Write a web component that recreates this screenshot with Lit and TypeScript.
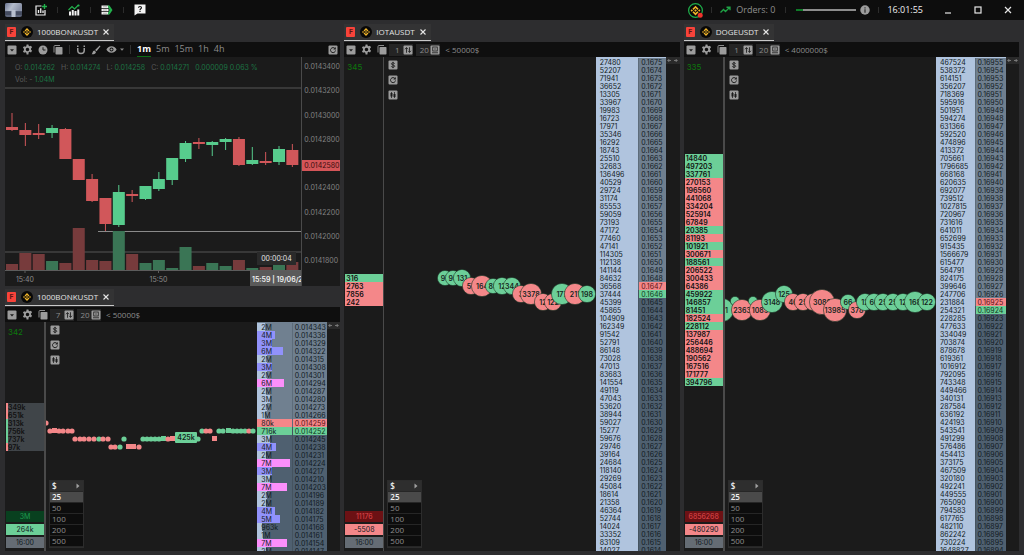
import { LitElement, html, svg, css } from "lit";
import { customElement, property } from "lit/decorators.js";
import { classMap } from "lit/directives/class-map.js";

/* ---------- icons ---------- */

const bnb = (size: number, ring = false) => html`<svg class="ico" width=${size} height=${size} viewBox="0 0 24 24" aria-hidden="true">
  <circle cx="12" cy="12" r=${ring ? 11 : 12} fill="#080808" stroke=${ring ? "#1fae4b" : "none"} stroke-width="2"></circle>
  <g fill="#f0b429">
    <path d="M12 4.2l4.9 4.9-1.9 1.9-3-3-3 3-1.9-1.9z"></path>
    <path d="M12 19.8l-4.9-4.9L9 13l3 3 3-3 1.9 1.9z"></path>
    <path d="M6 10.1L7.9 12 6 13.9 4.1 12zM18 10.1l1.9 1.9-1.9 1.9-1.9-1.9zM12 10l2 2-2 2-2-2z"></path>
  </g>
  ${ring ? svg`<circle cx="19.5" cy="19.5" r="4" fill="#f0342c"></circle>` : ""}
</svg>`;

const closeIcon = html`<svg class="ico" width="6" height="6" viewBox="0 0 6 6" aria-hidden="true"><path d="M.5.5l5 5M5.5.5l-5 5" stroke="#e6e6e6" stroke-width="1.1"></path></svg>`;

const boxIcon = (inner: unknown) => html`<svg class="ico" width="10" height="10" viewBox="0 0 20 20" aria-hidden="true">
  <rect x="1" y="1" width="18" height="18" rx="2" fill="#9c9c9c"></rect>${inner}</svg>`;

const dropIcon = boxIcon(svg`<path d="M6 8.5h8l-4 4.5z" fill="#1c1c1c"></path>`);
const reloadIcon = boxIcon(svg`<path d="M14 7.2A5 5 0 1 0 15 11" fill="none" stroke="#1c1c1c" stroke-width="2"></path><path d="M15.6 4v5h-5z" fill="#1c1c1c"></path>`);
const dollarIcon = boxIcon(svg`<path d="M13.3 7.3c-.5-1.2-1.7-1.7-3.3-1.7-1.9 0-3.2.8-3.2 2.1 0 3 6.6 1.5 6.6 4.6 0 1.4-1.4 2.2-3.4 2.2-1.8 0-3.1-.7-3.5-1.9M10 3.6v12.8" fill="none" stroke="#1c1c1c" stroke-width="1.8"></path>`);
const candlesIcon = boxIcon(svg`<path d="M7 4v12M13 4v12" stroke="#1c1c1c" stroke-width="1.5"></path><path d="M5 6h4v7H5zM11 8h4v6h-4z" fill="#1c1c1c"></path>`);
const sortIcon = boxIcon(svg`<path d="M7 15.5V6M4 8.5L7 5l3 3.5M13 4.5V14M10.5 11.5l2.5 3.5 3-3.5" fill="none" stroke="#1c1c1c" stroke-width="1.7"></path>`);
const depthIcon = boxIcon(svg`<rect x="5.5" y="4" width="9" height="8" fill="none" stroke="#1c1c1c" stroke-width="1.6"></rect><path d="M4 15.5h12M10 6.5v3" stroke="#1c1c1c" stroke-width="1.6"></path>`);

const gearIcon = html`<svg class="ico" width="11" height="11" viewBox="0 0 24 24" aria-hidden="true"><path fill="#9c9c9c" fill-rule="evenodd" d="M10 1h4l.6 3 2 1 3-1.3 2.3 3.6-2.2 2.3v2.8l2.3 2.3-2.4 3.6-3-1.3-2 1L14 23h-4l-.6-4-2-1-3 1.300L2 15.700l2.300-2.300v-2.800L2 8.300l2.400-3.600 3 1.300 2-1zM12 8.200a3.800 3.800 0 1 0 0 7.600 3.800 3.800 0 0 0 0-7.600z"></path></svg>`;
const copyIcon = html`<svg class="ico" width="10" height="10" viewBox="0 0 20 20" aria-hidden="true"><path d="M2 15V3a2 2 0 0 1 2-2h10" fill="none" stroke="#8c8c8c" stroke-width="2"></path><rect x="5" y="4" width="14" height="15" rx="1.5" fill="#9c9c9c"></rect></svg>`;
const clockIcon = html`<svg class="ico" width="10" height="10" viewBox="0 0 20 20" aria-hidden="true"><circle cx="10" cy="10" r="9" fill="#9c9c9c"></circle><path d="M10 4.5V10h5" fill="none" stroke="#1c1c1c" stroke-width="2"></path></svg>`;
const magnetIcon = html`<svg class="ico" width="10" height="10" viewBox="0 0 20 20" aria-hidden="true"><path d="M3.5 6v4.500a6.500 6.500 0 0 0 13 0V6" fill="none" stroke="#9c9c9c" stroke-width="3"></path><path d="M2 1h3v3H2zM15 1h3v3h-3z" fill="#9c9c9c"></path></svg>`;
const brushIcon = html`<svg class="ico" width="10" height="10" viewBox="0 0 20 20" aria-hidden="true"><path d="M17.5 1.2l1.6 1.5-8 10-3-2.800zM7 11l3 2.800c-.5 3.200-3 5-9 4.700C3.500 17 3 11.500 7 11z" fill="#9c9c9c"></path></svg>`;
const eyeIcon = html`<svg class="ico" width="11" height="9" viewBox="0 0 22 18" aria-hidden="true"><path fill="#9c9c9c" fill-rule="evenodd" d="M11 2.500C6 2.500 2.500 5.500.8 9c1.700 3.500 5.200 6.500 10.200 6.500S19.500 12.500 21.200 9C19.500 5.500 16 2.500 11 2.500zM11 5a4 4 0 1 1 0 8 4 4 0 0 1 0-8z"></path><circle cx="11" cy="9" r="2.2" fill="#9c9c9c"></circle></svg>`;
const caretIcon = html`<svg class="ico caret" width="4" height="3" viewBox="0 0 8 6" aria-hidden="true"><path d="M0 1h8L4 5.500z" fill="#8c8c8c"></path></svg>`;

/* ---------- shared rules ---------- */

const base = css`
  * { box-sizing: border-box; }
  button {
    font: inherit; color: inherit; background: none; border: 0; margin: 0; padding: 0;
    display: flex; align-items: center; justify-content: center;
  }
  .ico { display: block; flex: none; }
  .panel { display: flex; flex-direction: column; height: 100%; min-height: 0; }
  .bar {
    flex: none; height: 15px; display: flex; align-items: center; gap: 5px; padding: 0 2px;
    background: #0f0f0f; color: #8c8c8c; font: 8px/12px "Open Sans", sans-serif;
  }
  .canvas { flex: 1; min-height: 0; display: flex; background: #1b1b1b; overflow: hidden; }
  .divider { width: 1px; height: 9px; background: #333; margin: 0 1px; }
`;

@customElement("panel-tab")
class PanelTab extends LitElement {
  @property() name = "";
  static styles = [base, css`
    :host { display: flex; height: 18px; flex: none; }
    .tab {
      height: 17px; display: flex; align-items: center; padding: 0 5px 0 2px; background: #333334;
      border-bottom: 1px solid #c8c8c8; color: #e2e2e2; font: 8px/14px "Open Sans", sans-serif;
    }
    .flag {
      width: 9px; height: 10px; margin-right: 5px; border-radius: 1px; background: #f8433a; color: #5c1613;
      font: bold 7px/10px Roboto, sans-serif; text-align: center;
    }
    .name { margin: 0 5px 0 4px; }
  `];
  render() {
    return html`<div class="tab"><span class="flag">F</span>${bnb(12)}<span class="name">${this.name}</span>
      <button aria-label="Close ${this.name}">${closeIcon}</button></div>`;
  }
}

/* ---------- candle chart ---------- */

// up, high, open/close top, open/close bottom, low, volume top
const candles: [number, number, number, number, number, number][] = [
  [0, 113, 127, 130, 131, 264], [0, 123, 130, 135, 146, 253], [0, 124, 133, 135, 139, 254],
  [1, 125, 128, 133, 138, 261], [0, 128, 129, 159, 159, 263], [0, 159, 159, 180, 180, 228],
  [0, 174, 179, 201, 202, 260], [0, 198, 198, 224, 231, 261], [1, 185, 192, 225, 227, 231],
  [0, 190, 194, 196, 202, 254], [1, 186, 186, 199, 200, 263], [1, 172, 179, 189, 191, 260],
  [1, 158, 158, 180, 185, 268], [1, 141, 143, 159, 162, 247], [0, 138, 142, 144, 149, 266],
  [1, 141, 142, 145, 156, 263], [1, 138, 139, 142, 150, 266], [0, 137, 139, 165, 166, 260],
  [1, 147, 160, 164, 165, 268], [0, 152, 161, 163, 165, 267], [1, 146, 149, 162, 165, 262],
  [0, 144, 150, 165, 167, 262],
];
const scale = ["0.0143400", "0.0143200", "0.0143000", "0.0142800", "", "0.0142400", "0.0142200", "0.0142000", "0.0141800"];
const frames = ["1m", "5m", "15m", "1h", "4h"];

@customElement("candle-panel")
class CandlePanel extends LitElement {
  static styles = [base, css`
    :host { display: block; min-width: 0; min-height: 0; }
    .caret { margin-left: -2px; }
    .frames { display: flex; gap: 5px; font-size: 9px; }
    .frames button { height: 15px; border-bottom: 1px solid transparent; }
    .frames button.on { color: #fff; font-weight: 700; border-color: #0b6d14; }
    .last { margin-left: auto; }
    .plot { position: relative; flex: 1; min-width: 0; display: flex; justify-content: flex-end; overflow: hidden; }
    .plot svg { flex: none; display: block; }
    .plot text { font: 7px Inter, sans-serif; fill: #8a8a8a; }
    .plot .lit { fill: #e4e4e4; }
    .plot .now { fill: #f0f0f0; font-weight: 600; }
    .info { position: absolute; left: 10px; top: 5px; font: 7px/12px Inter, sans-serif; color: #5a5a5a; }
    .info p { margin: 0; display: flex; gap: 6px; }
    .info b { font-weight: 400; color: #1b7343; }
    .axis {
      position: relative; flex: none; width: 39px; border-left: 1px solid #4a4a4a; padding: 5px 0 20px 2px;
      display: flex; flex-direction: column; justify-content: space-between;
      color: #828282; font: 7px/10px Inter, sans-serif;
    }
    .axis span { height: 10px; }
    .axis mark { position: absolute; left: 0; right: 0; height: 11px; padding-left: 2px; line-height: 11px; background: #d45558; color: #3a0d0e; }
  `];
  render() {
    return html`<section class="panel">
      <panel-tab name="1000BONKUSDT"></panel-tab>
      <div class="bar">
        <button aria-label="Menu">${dropIcon}</button><button aria-label="Settings">${gearIcon}</button>
        <button aria-label="History">${clockIcon}</button><button aria-label="Duplicate">${copyIcon}</button>
        <span class="divider"></span>
        <button aria-label="Magnet">${magnetIcon}</button><button aria-label="Draw">${brushIcon}</button>
        <button aria-label="Visibility">${eyeIcon}</button>${caretIcon}
        <span class="divider"></span>
        <div class="frames">${frames.map((f, i) => html`<button class=${classMap({ on: i === 0 })}>${f}</button>`)}</div>
        <button class="last" aria-label="Reset chart">${reloadIcon}</button>
      </div>
      <div class="canvas">
        <div class="plot">
          <svg width="296" height="229" viewBox="5 57 296 229" role="img" aria-label="1000BONKUSDT one minute candles">
            <path d="M5 88h296M5 252h296" stroke="#565656" stroke-width="1"></path>
            <path d="M98 231.5h203" stroke="#8a8a8a" stroke-width="1"></path>
            ${candles.map(([up, hi, a, b, lo, v], i) => {
              const x = 6 + i * 13.35;
              const c = up ? "#57cc8d" : "#d1575a";
              return svg`<rect x=${x} y=${v} width="12" height=${270 - v} fill=${up ? "#3a7555" : "#773b3c"}></rect>
                <path d="M${x + 6} ${hi}V${lo}" stroke=${c} stroke-width="1"></path>
                <rect x=${x} y=${a} width="12" height=${b - a} fill=${c}></rect>`;
            })}
            <path d="M5 270.5h296M25 270v3M158.500 270v3" stroke="#5c5c5c" stroke-width="1"></path>
            <rect x="257" y="252" width="39" height="13" fill="#2a2a2a"></rect>
            <text class="lit" x="276.5" y="261" text-anchor="middle">00:00:04</text>
            <text x="25" y="282" text-anchor="middle">15:40</text>
            <text x="158.5" y="282" text-anchor="middle">15:50</text>
            <rect x="250" y="271" width="51" height="15" fill="#5a5a5a"></rect>
            <text class="now" x="252" y="282">15:59 | 19/06/25</text>
          </svg>
          <div class="info">
            <p><span>O: <b>0.014262</b></span><span>H: <b>0.014274</b></span><span>L: <b>0.014258</b></span><span>C: <b>0.014271</b></span><b>0.000009 0.063 %</b></p>
            <p><span>Vol: - <b>1.04M</b></span></p>
          </div>
        </div>
        <div class="axis">${scale.map((s) => html`<span>${s}</span>`)}<mark style="top:45%">0.0142580</mark></div>
      </div>
    </section>`;
  }
}

/* ---------- order book panels ---------- */

type Bubble = [number, number, number, string, string];
type Cell = [string, string];
interface Book {
  name: string; step: string; limit: string; count: string;
  view: string; width: number; height: number;
  from: number; tick: number; digits: number; ask: number;
  volumes: string[]; bars?: [number, string][];
  clusterAt: number; cluster: Cell[]; totals: Cell[];
  bubbles: Bubble[]; kind: string;
}

const bonk: Book = {
  name: "1000BONKUSDT", step: "7", limit: "< 50000$", count: "342",
  view: "46 322 211 229", width: 211, height: 229, kind: "thin",
  from: 14343, tick: 7, digits: 6, ask: 12,
  volumes: "2M 4M 3M 6M 2M 3M 2M 6M 2M 3M 2M 1M 80k 716k 3M 4M 2M 7M 3M 3M 7M 2M 2M 4M 5M 963k 1M 7M 2M".split(" "),
  bars: [[8, "l"], [18, "b"], [15, "b"], [26, "b"], [10, "l"], [15, "b"], [10, "l"], [27, "p"], [9, "l"], [13, "l"], [10, "l"], [8, "l"],
    [35, "r"], [35, "g"], [13, "l"], [19, "b"], [9, "l"], [33, "p"], [15, "b"], [13, "l"], [30, "p"], [10, "l"], [9, "l"], [18, "b"],
    [23, "b"], [5, "l"], [6, "l"], [30, "p"], [9, "l"]],
  clusterAt: 10,
  cluster: [["349k", "mr"], ["651k", "mr"], ["313k", "mg"], ["756k", "mg"], ["737k", "mg"], ["97k", "mr"]],
  totals: [["3M", "deep-g"], ["264k", "g"], ["16:00", "time"]],
  bubbles: [
    [46, 423, 2, "r", ""], [50, 431, 2, "r", ""], [54, 430, 2, "r", "sq"], [59, 431, 2, "r", ""], [63, 431, 2, "r", ""], [68, 431, 2, "r", ""], [72, 431, 2, "r", ""],
    [75, 439, 2, "r", ""], [80, 439, 2, "r", ""], [84, 439, 2, "r", ""], [89, 439, 2, "r", ""], [94, 439, 2, "r", ""], [99, 439, 2, "g", ""], [103, 439, 2, "r", ""], [108, 439, 2, "r", ""],
    [111, 447, 2, "r", ""], [115, 447, 2, "r", ""], [120, 447, 2, "g", ""], [124, 439, 2, "g", ""], [128, 446, 2, "r", "sq"], [133, 446, 2, "r", "sq"], [139, 447, 2, "r", ""],
    [143, 439, 2, "g", ""], [147, 439, 2, "g", ""], [151, 439, 2, "g", ""], [155, 439, 2, "g", ""], [159, 439, 2, "g", ""], [163, 438, 2, "g", "sq"], [168, 439, 2, "r", ""], [172, 438, 2, "r", "sq"],
    [198, 439, 2, "g", ""], [202, 431, 2, "g", ""], [206, 431, 2, "r", ""], [210, 431, 2, "r", ""], [214, 438, 2, "r", "sq"], [219, 431, 2, "g", ""], [223, 431, 2, "g", ""],
    [228, 430, 2, "g", "sq"], [233, 431, 2, "g", ""], [237, 431, 2, "g", ""], [241, 431, 2, "g", ""], [245, 431, 2, "g", ""], [249, 431, 2, "r", ""], [253, 431, 2, "g", ""],
    [186, 438, 6, "g", "425k"],
  ],
};

const iota: Book = {
  name: "IOTAUSDT", step: "1", limit: "< 50000$", count: "345",
  view: "385 57 211 494", width: 211, height: 494, kind: "wide",
  from: 1675, tick: 1, digits: 4, ask: 28,
  volumes: "27480 52207 71941 36652 13305 33967 19983 16723 17971 35346 16292 18743 25510 32683 136496 40529 29724 31174 85553 59059 73193 47172 77460 47141 114305 112138 141144 84632 36568 37444 45399 45865 104909 162349 91542 52791 86148 73028 47013 83683 141554 49119 47043 53620 38944 59027 15277 59676 29746 39164 24684 118140 29269 45084 18614 21358 46364 52744 14024 33352 83109 14027".split(" "),
  clusterAt: 27,
  cluster: [["316", "g"], ["2763", "r"], ["7856", "r"], ["242", "r"]],
  totals: [["11176", "deep-r"], ["-5508", "r"], ["16:00", "time"]],
  bubbles: [
    [445, 278, 7, "g", "97"], [453, 278, 7, "g", "95"], [462, 278, 8, "g", "131"], [471, 286, 8, "r", "57"], [482, 286, 10, "r", "164"],
    [493, 286, 7, "g", "85"], [502, 286, 8, "g", "12"], [512, 286, 8, "g", "344"], [521, 294, 8, "r", "3"], [531, 294, 10, "r", "3378"],
    [543, 302, 8, "r", "12"], [553, 302, 8, "r", "122"], [562, 294, 10, "g", "177"], [575, 294, 10, "r", "211"], [587, 294, 8, "g", "198"],
  ],
};

const doge: Book = {
  name: "DOGEUSDT", step: "1", limit: "< 4000000$", count: "335",
  view: "725 57 211 494", width: 211, height: 494, kind: "mid",
  from: 16955, tick: 1, digits: 5, ask: 30,
  volumes: "467524 538372 614151 356207 718369 595916 501951 594274 631366 592520 474896 413372 705661 1796685 668168 620635 692077 739512 1027815 720967 731616 641011 652699 915435 1566679 615477 564791 824175 399646 247706 231884 254321 228285 477633 334049 703874 878678 619361 1016912 792095 743348 449466 340131 287584 636192 424193 543541 491299 576486 454413 373175 467509 320180 492241 449555 765090 794583 617765 482110 862242 730224 1648827".split(" "),
  clusterAt: 12,
  cluster: "14840g 497203g 337761g 270153r 196560r 441068r 334204r 525914r 67849r 20385g 81193r 101921g 300671r 188561g 206522r 300433r 64386r 459922g 146857g 81451g 182524r 228112g 137987r 256446r 488694r 190562r 167516r 171777r 394796g"
    .split(" ").map((s): Cell => [s.slice(0, -1), s.slice(-1)]),
  totals: [["6856268", "deep-r"], ["-480290", "r"], ["16:00", "time"]],
  bubbles: [
    [722, 310, 11, "g", "321"], [735, 301, 4, "g", ""], [742, 310, 10, "r", "2363"], [753, 301, 4, "g", ""], [760, 310, 10, "r", "1085"],
    [772, 302, 10, "g", "3148"], [784, 294, 8, "g", "125"], [793, 302, 8, "r", "46"], [803, 302, 8, "r", "25"], [813, 302, 8, "r", ""],
    [822, 302, 12, "r", "3086"], [835, 310, 11, "r", "13985"], [848, 302, 7, "g", "66"], [857, 310, 8, "r", "378"],
    [865, 302, 8, "g", "12"], [874, 302, 8, "g", "60"], [883, 302, 8, "g", "25"], [893, 302, 8, "g", "25"], [903, 302, 8, "g", "12"],
    [915, 302, 10, "g", "168"], [927, 302, 8, "g", "122"],
  ],
};

const GREEN = "#6ccf98";
const RED = "#f48789";
const sizes = ["25", "50", "100", "200", "500"];

@customElement("depth-panel")
class DepthPanel extends LitElement {
  @property({ attribute: false }) book!: Book;
  static styles = [base, css`
    :host { display: block; min-width: 0; min-height: 0; }
    .picks { display: flex; gap: 3px; margin-left: -3px; }
    .pick { height: 12px; display: flex; align-items: center; background: #242424; padding-left: 2px; }
    .pick span { width: 12px; text-align: center; }
    .canvas { font: 7px/8px Inter, sans-serif; color: #111a22; }
    .left { flex: none; width: 41px; border-right: 2px solid #4a4a4a; padding: 1px 0 3px 1px; display: flex; flex-direction: column; }
    .wide .left { border-right-width: 1px; width: 40px; }
    .count { height: 20px; flex: none; padding-left: 2px; color: #0c780c; font: 8px/19px Inter, sans-serif; }
    .cluster { flex: none; display: flex; flex-direction: column; font-weight: 600; line-height: 10px; color: #101010; }
    .cluster span { height: 8px; padding-left: 1px; }
    .g { background: #6ccf98; }
    .r { background: #f48789; }
    .mr { background: #404549; border-left: 2px solid #f48789; }
    .mg { background: #404549; border-left: 2px solid #6ccf98; }
    .cluster .mr, .cluster .mg { padding-left: 0; }
    .totals { flex: none; margin-top: auto; display: flex; flex-direction: column; gap: 2px; text-align: center; line-height: 11px; }
    .totals span { height: 11px; }
    .deep-g { background: #08401f; color: #1f9c4f; }
    .deep-r { background: #6c1114; color: #e0494c; }
    .time { background: #656c74; }
    .flow { position: relative; flex: 1; min-width: 0; display: flex; justify-content: flex-end; overflow: hidden; }
    .flow svg { flex: none; }
    .flow text { font: 600 7px Inter, sans-serif; fill: #14241c; }
    .tools { position: absolute; left: 4px; top: 3px; display: flex; flex-direction: column; gap: 5px; }
    .sizes {
      position: absolute; left: 3px; bottom: 3px; width: 35px; border: 1px solid #2c2c2c; background: #0d0d0d;
      color: #8e8e8e; font: 8px/10px "Open Sans", sans-serif;
    }
    .sizes button { width: 100%; height: 11px; padding: 0 2px; justify-content: flex-start; border-bottom: 1px solid #262626; }
    .sizes .top { background: #2e2e2e; color: #f2f2f2; font-weight: 600; justify-content: space-between; padding-right: 3px; }
    .sizes .on { background: #4a4a4a; color: #f2f2f2; font-weight: 600; }
    .book { flex: none; width: 70px; background: #b0c4de; padding-top: 1px; }
    .thin .book { background: #708090; }
    table { width: 100%; border-collapse: collapse; table-layout: fixed; }
    td { height: 8px; padding: 2px 0 0 4px; line-height: 6px; white-space: nowrap; }
    .thin td { background: #708090; }
    .thin .bid td { background: #4f6070; }
    td.price { width: 27px; padding-left: 2px; background: #6f7f8f; border-left: 1px solid #5d6c7a; }
    .thin td.price { width: 35px; }
    .mid td.price { width: 31px; }
    .bid td.price { background: #4f6070; border-left-color: #45535f; }
    .best.ask td.price { background: #f48789; color: #5a1214; }
    .best.bid td.price { background: #6ccf98; color: #0c3a20; }
    .thin td.vol { position: relative; }
    .thin td.vol span { position: relative; }
    .thin td.vol i { position: absolute; left: 0; top: 0; height: 8px; }
    .l { background: #b0c4de; }
    .b { background: #9192fb; }
    .p { background: #fc8ffb; }
    .strip { flex: none; width: 13px; }
    .wide .strip { width: 14px; }
    .strip button { width: 100%; height: 7px; background: #2a2a2a; }
  `];
  render() {
    const d = this.book;
    return html`<section class="panel">
      <panel-tab name=${d.name}></panel-tab>
      <div class="bar">
        <button aria-label="Menu">${dropIcon}</button><button aria-label="Settings">${gearIcon}</button>
        <button aria-label="Duplicate">${copyIcon}</button>
        <div class="picks">
          <div class="pick"><span>${d.step}</span><button aria-label="Price step">${sortIcon}</button></div>
          <div class="pick"><span>20</span><button aria-label="Depth">${depthIcon}</button></div>
        </div>
        <span>${d.limit}</span>
      </div>
      <div class="canvas ${d.kind}">
        <div class="left">
          <div class="count">${d.count}</div>
          <div class="cluster" style="margin-top:${d.clusterAt * 8 - 20}px">${d.cluster.map(([t, c]) => html`<span class=${c}>${t}</span>`)}</div>
          <div class="totals">${d.totals.map(([t, c]) => html`<span class=${c}>${t}</span>`)}</div>
        </div>
        <div class="flow">
          <svg width=${d.width} height=${d.height} viewBox=${d.view} role="img" aria-label="${d.name} trades">${d.bubbles.map((b) => this.trade(b))}</svg>
          <div class="tools">
            <button aria-label="Value in dollars">${dollarIcon}</button><button aria-label="Refresh">${reloadIcon}</button><button aria-label="Candles">${candlesIcon}</button>
          </div>
          <div class="sizes">
            <button class="top">$ <svg class="ico" width="4" height="6" viewBox="0 0 4 6" aria-hidden="true"><path d="M.5.5L3.5 3 .5 5.500z" fill="#a0a0a0"></path></svg></button>
            ${sizes.map((s, i) => html`<button class=${classMap({ on: i === 0 })}>${s}</button>`)}
          </div>
        </div>
        <div class="book"><table aria-label="${d.name} order book"><tbody>${d.volumes.map((v, i) => this.level(v, i))}</tbody></table></div>
        <div class="strip"><button aria-label="Resize"><svg class="ico" width="11" height="5" viewBox="0 0 11 5" aria-hidden="true"><path d="M4 2.500H.8M2.300 1L.8 2.500 2.300 4M7 2.500h3.200M8.700 1l1.500 1.500L8.700 4" fill="none" stroke="#8a8a8a" stroke-width=".8"></path></svg></button></div>
      </div>
    </section>`;
  }
  level(v: string, i: number) {
    const d = this.book;
    const price = "0." + String(d.from - i * d.tick).padStart(d.digits, "0");
    const cls = { ask: i <= d.ask, bid: i > d.ask, best: i === d.ask || i === d.ask + 1 };
    const bar = d.bars?.[i];
    return html`<tr class=${classMap(cls)}><td class="vol">${bar ? html`<i class=${bar[1]} style="width:${bar[0]}px"></i>` : ""}<span>${v}</span></td><td class="price">${price}</td></tr>`;
  }
  trade([x, y, r, side, t]: Bubble) {
    const fill = side === "g" ? GREEN : RED;
    if (t === "sq") return svg`<rect x=${x - 2} y=${y - 2} width="5" height="5" fill=${fill}></rect>`;
    if (t.endsWith("k")) return svg`<rect x=${x - 11} y=${y - 6} width="22" height="11" rx="1" fill=${fill}></rect><text x=${x} y=${y + 2} text-anchor="middle">${t}</text>`;
    return svg`<circle cx=${x} cy=${y} r=${r < 3 ? 2.6 : r + 0.6} fill=${fill} stroke="#1b3527" stroke-width=${r < 3 ? 0 : 0.6}></circle>
      ${t ? svg`<text x=${x} y=${y + 2.5} text-anchor="middle">${t}</text>` : ""}`;
  }
}

/* ---------- window ---------- */

@customElement("app-root")
class AppRoot extends LitElement {
  static styles = [base, css`
    :host { display: flex; flex-direction: column; height: 100vh; background: #2d2d2f; overflow: hidden; }
    header {
      flex: none; height: 20px; display: flex; align-items: center; padding: 0 12px 0 5px; background: #0d0d0d;
      color: #8f8f8f; font: 9px/14px "Open Sans", sans-serif;
    }
    .group { display: flex; align-items: center; }
    .right { margin-left: auto; }
    .sep { width: 1px; height: 6px; background: #2c2c2c; margin: 0 10px; }
    .first { margin-left: 13px; }
    .right .sep.near { margin: 0 8px; }
    .trend { margin-right: 5px; }
    input { appearance: none; width: 60px; height: 10px; margin: 0 4px 0 0; background: linear-gradient(90deg, #0f7a28 10%, #8c8c8c 10%) center / 100% 2px no-repeat; }
    input::-webkit-slider-thumb { appearance: none; width: 1px; height: 2px; background: #0f7a28; }
    time { color: #f0f0f0; }
    .win { gap: 22px; margin-left: 21px; }
    main {
      flex: 1; min-height: 0; display: grid; grid-template-columns: repeat(3, minmax(0, 1fr));
      grid-template-rows: repeat(2, minmax(0, 1fr)); gap: 3px 4px; padding: 4px 5px;
    }
    .low { grid-area: 2 / 1; }
    .tall { grid-row: 1 / span 2; }
    .c2 { grid-column: 2; }
    .c3 { grid-column: 3; }
  `];
  render() {
    return html`
      <header>
        <div class="group">
          <svg class="ico" width="17" height="14" viewBox="0 0 17 14" aria-hidden="true">
            <defs><linearGradient id="lg" x1="0" y1="0" x2="1" y2="0.3"><stop offset="0" stop-color="#6a7390"></stop><stop offset=".5" stop-color="#b4bccb"></stop><stop offset="1" stop-color="#8b93a8"></stop></linearGradient></defs>
            <rect x="0" y="0" width="17" height="14" rx="2" fill="#5d657a"></rect>
            <path d="M0 2a2 2 0 0 1 2-2h13a2 2 0 0 1 2 2v6H0z" fill="url(#lg)"></path>
            <path d="M0 8.500h6v3.500H0zM11 8.500h6v3.500h-6z" fill="#454c60"></path><path d="M6.500 7h4v7h-4z" fill="#b9c0ce"></path>
          </svg>
          <button class="first" aria-label="Add chart"><svg class="ico" width="12" height="12" viewBox="0 0 24 24" aria-hidden="true"><path d="M13 4H2v18h18V12" fill="none" stroke="#f0f0f0" stroke-width="2.4"></path><path d="M7 18v-6M11.500 18V8.500M16 18v-5" stroke="#f0f0f0" stroke-width="2.6"></path><path d="M19 0v10M14 5h10" stroke="#22b14c" stroke-width="2.8"></path></svg></button>
          <span class="sep"></span>
          <button aria-label="Charts"><svg class="ico" width="12" height="12" viewBox="0 0 24 24" aria-hidden="true"><path d="M4 23v-8M9.500 23V12M15 23v-9M20.500 23V11" stroke="#f0f0f0" stroke-width="4"></path><path d="M1 12l7-7 5 5 8-8" fill="none" stroke="#22b14c" stroke-width="2.4"></path><circle cx="21" cy="3" r="2.2" fill="#22b14c"></circle></svg></button>
          <span class="sep"></span>
          <button aria-label="Order books"><svg class="ico" width="12" height="12" viewBox="0 0 24 24" aria-hidden="true"><path d="M1 3h14v5H1zM1 9.500h14v5H1zM1 16h14v5H1z" fill="#f0f0f0"></path><path d="M4 5.500h8M4 12h8M4 18.500h8" stroke="#777" stroke-width="1"></path><path d="M13 3h4l6 9-6 9h-4l4-9z" fill="#22b14c"></path></svg></button>
          <span class="sep"></span>
          <button aria-label="Help"><svg class="ico" width="12" height="12" viewBox="0 0 24 24" aria-hidden="true"><path d="M1 1h22v18H7l-6 4z" fill="#f4f4f4"></path><path d="M9 7.500c0-3.500 6-3.500 6 0 0 2.200-3 2-3 4.500" fill="none" stroke="#111" stroke-width="2.2"></path><path d="M10.800 13.500h2.400v2.300h-2.400z" fill="#111"></path></svg></button>
        </div>
        <div class="group right">
          <button aria-label="Exchange connection">${bnb(15, true)}</button>
          <span class="sep near"></span>
          <svg class="ico trend" width="11" height="8" viewBox="0 0 22 16" aria-hidden="true"><path d="M1 13l6-6 4 4 8-8M13 2.500h7v6" fill="none" stroke="#1fa346" stroke-width="2.6"></path></svg>
          <span>Orders: 0</span>
          <span class="sep"></span>
          <input type="range" min="0" max="100" value="10" aria-label="Volume">
          <svg class="ico" width="10" height="10" viewBox="0 0 20 20" aria-hidden="true"><circle cx="10" cy="10" r="9.5" fill="#9c9c9c"></circle><path d="M10 4.500v2.500M10 8.500v7" stroke="#222" stroke-width="2.2"></path></svg>
          <span class="sep near"></span>
          <time>16:01:55</time>
        </div>
        <div class="group win">
          <button aria-label="Minimize"><svg class="ico" width="8" height="8" viewBox="0 0 8 8" aria-hidden="true"><path d="M1 7h6" stroke="#e6e6e6" stroke-width="1.2"></path></svg></button>
          <button aria-label="Maximize"><svg class="ico" width="8" height="8" viewBox="0 0 8 8" aria-hidden="true"><rect x="1" y="1" width="6" height="6" fill="none" stroke="#e6e6e6" stroke-width="1.2"></rect></svg></button>
          <button aria-label="Close"><svg class="ico" width="8" height="8" viewBox="0 0 8 8" aria-hidden="true"><path d="M1 1l6 6M7 1L1 7" stroke="#e6e6e6" stroke-width="1.2"></path></svg></button>
        </div>
      </header>
      <main>
        <candle-panel></candle-panel>
        <depth-panel class="low" .book=${bonk}></depth-panel>
        <depth-panel class="tall c2" .book=${iota}></depth-panel>
        <depth-panel class="tall c3" .book=${doge}></depth-panel>
      </main>`;
  }
}
